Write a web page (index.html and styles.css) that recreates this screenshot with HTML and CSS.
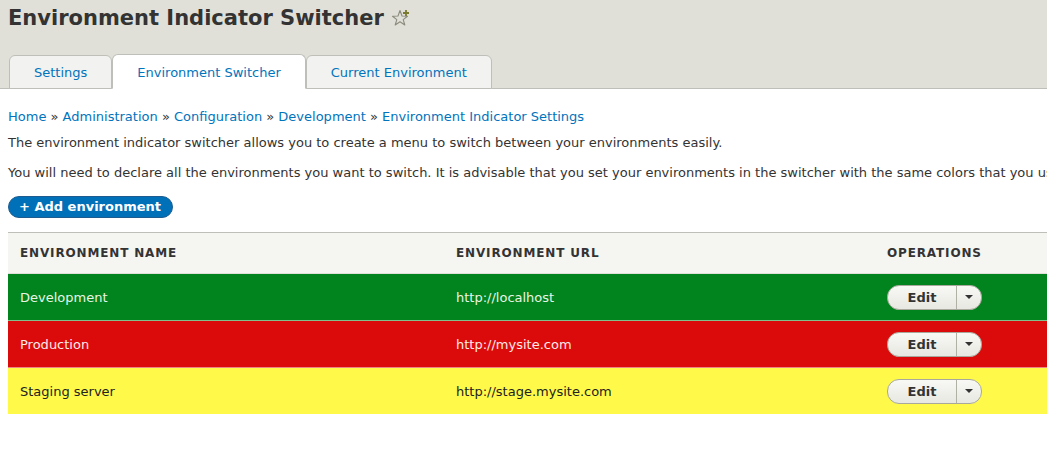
FILE: index.html
```html
<!DOCTYPE html>
<html>
<head>
<meta charset="utf-8">
<link rel="stylesheet" href="styles.css">
</head>
<body>
<div class="page">
  <header class="page-header">
    <h1 class="title">Environment Indicator Switcher <span class="star"><svg width="20" height="20" viewBox="0 0 20 20"><path d="M9 2.5 L11 8 L16.5 8.3 L12.2 11.6 L13.8 17 L9 13.8 L4.2 17 L5.8 11.6 L1.5 8.3 L7 8 Z" fill="none" stroke="#8c8b7e" stroke-width="1.1" stroke-linejoin="round"/><path d="M15 2 V8 M12 5 H18" stroke="#7a7a2e" stroke-width="1.8"/></svg></span></h1>
    <ul class="tabs">
      <li class="tab"><a href="#">Settings</a></li>
      <li class="tab active"><a href="#">Environment Switcher</a></li>
      <li class="tab"><a href="#">Current Environment</a></li>
    </ul>
  </header>
  <main class="content">
    <nav class="breadcrumb"><a href="#">Home</a> » <a href="#">Administration</a> » <a href="#">Configuration</a> » <a href="#">Development</a> » <a href="#">Environment Indicator Settings</a></nav>
    <p class="text">The environment indicator switcher allows you to create a menu to switch between your environments easily.</p>
    <p class="text">You will need to declare all the environments you want to switch. It is advisable that you set your environments in the switcher with the same colors that you use in the environment indicator.</p>
    <div class="actions"><a class="btn-primary" href="#">+ Add environment</a></div>
    <table class="env-table">
      <thead>
        <tr><th class="c1">Environment name</th><th class="c2">Environment URL</th><th class="c3">Operations</th></tr>
      </thead>
      <tbody>
        <tr class="row green"><td>Development</td><td>http://localhost</td><td><span class="dropbutton"><span class="db-main">Edit</span><span class="db-toggle"><span class="caret"></span></span></span></td></tr>
        <tr class="row red"><td>Production</td><td>http://mysite.com</td><td><span class="dropbutton"><span class="db-main">Edit</span><span class="db-toggle"><span class="caret"></span></span></span></td></tr>
        <tr class="row yellow"><td>Staging server</td><td>http://stage.mysite.com</td><td><span class="dropbutton"><span class="db-main">Edit</span><span class="db-toggle"><span class="caret"></span></span></span></td></tr>
      </tbody>
    </table>
  </main>
</div>
</body>
</html>
```

FILE: styles.css
```css
html, body {
  margin: 0;
  padding: 0;
  overflow: hidden;
  background: #fff;
}
body {
  font-family: "DejaVu Sans", Verdana, sans-serif;
  font-size: 13px;
  color: #333;
}
.page {
  width: 1400px;
}
.page-header {
  background: #e0e0d8;
  padding: 3px 0 0 8px;
  border-bottom: 1px solid #bfbfba;
}
.title {
  margin: 0;
  font-size: 21px;
  font-weight: bold;
  color: #333;
  line-height: 30px;
  display: flex;
  align-items: center;
}
.star {
  display: inline-flex;
  margin-left: 7px;
}
.tabs {
  list-style: none;
  margin: 21px 0 -1px 1px;
  padding: 0;
  display: flex;
  align-items: flex-end;
  gap: 0;
}
.tab {
  background: #f2f2f0;
  border: 1px solid #bfbfba;
  border-radius: 6px 6px 0 0;
  display: block;
}
.tab a {
  display: block;
  color: #0074bd;
  text-decoration: none;
  padding: 1px 24px 0;
  line-height: 31px;
}
.tab.active {
  background: #fff;
  border-bottom-color: #fff;
}
.tab.active a {
  padding-top: 2px;
}
.content {
  padding: 19px 0 0 8px;
}
.breadcrumb a {
  color: #0074bd;
  text-decoration: none;
}
.breadcrumb {
  color: #333;
  line-height: 18px;
}
.text {
  margin: 8px 0 12px;
  line-height: 18px;
  white-space: nowrap;
}
.actions {
  margin: 14px 0 14px;
}
.btn-primary {
  display: inline-block;
  background: #0071b8;
  border: 1px solid #1e5c90;
  color: #fff;
  font-weight: bold;
  text-decoration: none;
  border-radius: 12px;
  padding: 2px 11px 2px 10px;
  line-height: 16px;
}
.env-table {
  border-collapse: collapse;
  width: 1300px;
}
.env-table th {
  background: #f5f5f2;
  border-top: 1px solid #bfbfba;
  border-bottom: 1px solid #e0e0d8;
  text-align: left;
  text-transform: uppercase;
  font-size: 12px;
  letter-spacing: 0.85px;
  font-weight: bold;
  color: #333;
  height: 40px;
  padding: 0 12px;
}
.c1 { width: 412px; }
.c2 { width: 407px; }
.env-table td {
  height: 46px;
  padding: 0 12px;
}
.row + .row td {
  border-top: 1px solid rgba(255,255,255,0.5);
}
.row.green { background: #01831d; color: #e8f5e6; }
.row.red { background: #dc0b0b; color: #fdeaea; }
.row.yellow { background: #fffa4a; color: #222; }
.dropbutton {
  display: inline-flex;
  height: 23px;
  border: 1px solid #a8a89c;
  border-radius: 12px;
  background: linear-gradient(#f8f8f5, #e8e8e2);
  overflow: hidden;
  vertical-align: middle;
}
.db-main {
  width: 68px;
  display: flex;
  align-items: center;
  justify-content: center;
  font-weight: bold;
  color: #333;
}
.db-toggle {
  width: 24px;
  border-left: 1px solid #b0b0a4;
  display: flex;
  align-items: center;
  justify-content: center;
}
.caret {
  width: 0;
  height: 0;
  border-left: 4px solid transparent;
  border-right: 4px solid transparent;
  border-top: 4px solid #333;
}
```
